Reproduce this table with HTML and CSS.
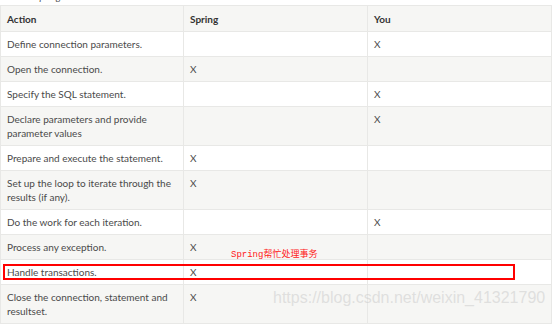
FILE: index.html
```html
<!doctype html>
<html lang="en">
    <head>
        <meta charset="UTF-8" />
        <title>Spring JDBC - who does what?</title>
        <link rel="stylesheet" href="styles.css">
    </head>
    <body>
        <div class="page">
            <div class="caption">Table 4. Spring JDBC - who does what?</div>
            <table class="who-table">
                <thead>
                    <tr>
                        <th>Action</th>
                        <th>Spring</th>
                        <th>You</th>
                    </tr>
                </thead>
                <tbody>
                    <tr><td>Define connection parameters.</td><td></td><td>X</td></tr>
                    <tr><td>Open the connection.</td><td>X</td><td></td></tr>
                    <tr><td>Specify the SQL statement.</td><td></td><td>X</td></tr>
                    <tr><td>Declare parameters and provide parameter values</td><td></td><td>X</td></tr>
                    <tr><td>Prepare and execute the statement.</td><td>X</td><td></td></tr>
                    <tr><td>Set up the loop to iterate through the results (if any).</td><td>X</td><td></td></tr>
                    <tr><td>Do the work for each iteration.</td><td></td><td>X</td></tr>
                    <tr><td>Process any exception.</td><td>X</td><td></td></tr>
                    <tr class="marked"><td>Handle transactions.</td><td>X</td><td></td></tr>
                    <tr><td>Close the connection, statement and resultset.</td><td>X</td><td></td></tr>
                </tbody>
            </table>

            <!-- hand-drawn annotation on top of the screenshot -->
            <div class="mark-box"></div>
            <div class="mark-note">Spring帮忙处理事务</div>
            <div class="watermark">https://blog.csdn.net/weixin_41321790</div>
        </div>
    </body>
</html>
```

FILE: styles.css
```css
html,
body {
    margin: 0;
    padding: 0;
    background: #ffffff;
}

body {
    font-family: "Lato", sans-serif;
    color: #4a4a4a;
    overflow: hidden;
}

.page {
    position: relative;
    width: 553px;
    height: 327px;
    overflow: hidden;
}

.caption {
    font-size: 10px;
    line-height: 14px;
    font-style: italic;
    color: #555555;
    margin-top: -11px;
    height: 16px;
}

.who-table {
    width: 552px;
    border-collapse: collapse;
    table-layout: fixed;
    font-size: 10px;
    line-height: 14px;
}

.who-table th,
.who-table td {
    border: 1px solid #e8e8e6;
    padding: 5px 6px;
    text-align: left;
    vertical-align: top;
}

.who-table th:first-child,
.who-table td:first-child {
    width: 170px;
}

.who-table th {
    font-weight: 700;
    color: #333333;
    background: #f6f6f4;
    padding-top: 6px;
    padding-bottom: 5px;
}

.who-table tbody tr:nth-child(even) {
    background: #f6f6f4;
}

.mark-box {
    position: absolute;
    left: 3px;
    top: 264px;
    width: 508px;
    height: 12px;
    border: 2px solid #ff0000;
}

.mark-note {
    position: absolute;
    left: 231px;
    top: 249px;
    font-family: "Liberation Mono", "Noto Sans CJK SC", monospace;
    font-size: 9px;
    line-height: 12px;
    color: #ff2020;
}

.watermark {
    position: absolute;
    left: 273px;
    top: 288px;
    font-family: "Liberation Sans", Arial, sans-serif;
    font-size: 16px;
    line-height: 20px;
    color: rgba(200, 200, 200, 0.5);
}
```
